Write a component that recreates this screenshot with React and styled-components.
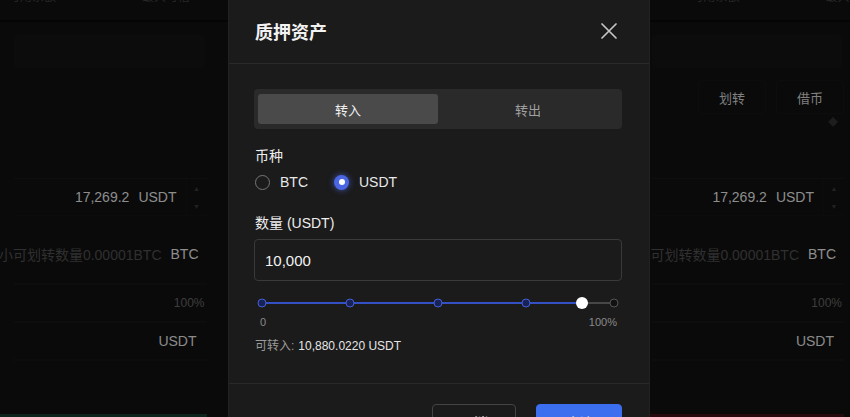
import React from 'react';
import styled, { createGlobalStyle } from 'styled-components';

const GlobalStyle = createGlobalStyle`
  body {
    margin: 0;
    background: #0b0b0b;
    font-family: "Liberation Sans", "Noto Sans CJK SC", sans-serif;
  }
`;

const PAGE = styled.div`
  position: relative;
  width: 850px;
  height: 417px;
  overflow: hidden;
  display: grid;
  grid-template-columns: 1fr 2fr 1fr;
  background: #0f0f0f;
`;

const OVERLAY = styled.div`
  position: absolute;
  inset: 0;
  background: rgba(0, 0, 0, 0.32);
`;

/* background trade panels */

const PANEL = styled.div`
  display: flex;
  flex-direction: column;
  padding: 0 6px 0 14px;
  overflow: hidden;
  color: #d0d0d0;
  font-size: 14px;
`;

const CENTER = styled.div`
  border-top: 2px solid #080808;
  margin-top: 20px;
`;

const TOP_ROW = styled.div`
  height: 22px;
  margin: 0 -6px 0 -14px;
  padding-left: ${(p) => p.$offset}px;
  display: flex;
  gap: 86px;
  border-bottom: 2px solid #080808;
  box-sizing: border-box;
  white-space: nowrap;

  span {
    margin-top: -13px;
    font-size: 12px;
    color: #3a3a3a;
  }
`;

const TAB_BOX = styled.div`
  height: 33px;
  margin-top: 13px;
  margin-right: 2px;
  background: #121212;
  border-radius: 4px;
`;

const ACTION_ROW = styled.div`
  height: 34px;
  margin-top: 12px;
  display: flex;
  justify-content: flex-end;
  gap: 10px;
  visibility: ${(p) => (p.$show ? 'visible' : 'hidden')};
`;

const GHOST_BUTTON = styled.div`
  width: 66px;
  display: flex;
  align-items: center;
  justify-content: center;
  border: 1px solid #141414;
  border-radius: 4px;
  font-size: 13px;
  color: #bdbdbd;
`;

const ICON_ROW = styled.div`
  height: 30px;
  display: flex;
  justify-content: flex-end;
  align-items: flex-start;
  padding-right: 6px;
  color: #2c2c2c;
  font-size: 10px;
`;

const FIELD = styled.div`
  height: 36px;
  margin-top: ${(p) => p.$top || 0}px;
  display: flex;
  align-items: center;
  justify-content: flex-end;
  gap: 9px;
  border-top: ${(p) => (p.$boxed ? '1px solid #151515' : 'none')};
  border-bottom: ${(p) => (p.$boxed ? '1px solid #131313' : 'none')};
  padding-right: ${(p) => p.$pad || 0}px;
  white-space: nowrap;
`;

const DIM = styled.span`
  color: #474747;
`;

const STEPPER = styled.div`
  width: 20px;
  height: 100%;
  display: flex;
  flex-direction: column;
  justify-content: space-around;
  align-items: center;
  border-left: 1px solid #131313;
  font-size: 7px;
  color: #333;
`;

const RULE = styled.div`
  height: 2px;
  margin-top: ${(p) => p.$top}px;
  background: #141414;
`;

const SMALL = styled.div`
  margin-top: ${(p) => p.$top}px;
  text-align: right;
  font-size: ${(p) => p.$size || 14}px;
  color: ${(p) => p.$color || '#cccccc'};
  padding-right: ${(p) => p.$pad || 0}px;
`;

const TRADE_BUTTON = styled.div`
  height: 30px;
  margin-top: auto;
  margin-bottom: -27px;
  margin-left: -14px;
  background: ${(p) => p.$color};
`;

const TradePanel = ({ actions, offset, buy }) => (
  <PANEL>
    <TOP_ROW $offset={offset}>
      <span>可用余额</span>
      <span>最大可借</span>
    </TOP_ROW>
    <TAB_BOX />
    <ACTION_ROW $show={actions}>
      <GHOST_BUTTON>划转</GHOST_BUTTON>
      <GHOST_BUTTON>借币</GHOST_BUTTON>
    </ACTION_ROW>
    <ICON_ROW>{actions ? '◆' : ''}</ICON_ROW>
    <FIELD $top={34} $boxed>
      <span>17,269.2</span>
      <span>USDT</span>
      <STEPPER>
        <span>▲</span>
        <span>▼</span>
      </STEPPER>
    </FIELD>
    <FIELD $top={20} $pad={8}>
      <DIM>最小可划转数量0.00001BTC</DIM>
      <span>BTC</span>
    </FIELD>
    <RULE $top={11} />
    <SMALL $top={11} $size={12} $color="#5c5c5c" $pad={2}>100%</SMALL>
    <RULE $top={11} />
    <SMALL $top={10} $pad={10}>USDT</SMALL>
    <RULE $top={10} />
    <TRADE_BUTTON $color={buy ? '#14352b' : '#3a1015'} />
  </PANEL>
);

/* modal */

const MODAL = styled.div`
  position: absolute;
  left: 228px;
  top: -6px;
  width: 422px;
  height: 470px;
  box-sizing: border-box;
  display: flex;
  flex-direction: column;
  background: #1b1b1b;
  border-left: 1px solid #222;
  border-right: 1px solid #222;
  border-radius: 6px;
  color: #ececec;
`;

const HEADER = styled.div`
  height: 70px;
  box-sizing: border-box;
  padding: 4px 32px 0 26px;
  display: flex;
  align-items: center;
  justify-content: space-between;
  border-bottom: 1px solid #2a2a2a;
`;

const TITLE = styled.h2`
  margin: 0;
  font-size: 18px;
  font-weight: 700;
  color: #f2f2f2;
`;

const CLOSE = styled.button`
  padding: 0;
  border: none;
  background: none;
  display: flex;
  color: #c4c4c4;
`;

const BODY = styled.div`
  padding: 25px 27px 29px 25px;
  display: flex;
  flex-direction: column;
`;

const TABS = styled.div`
  height: 40px;
  box-sizing: border-box;
  padding: 5px 4px;
  display: grid;
  grid-template-columns: 1fr 1fr;
  background: #2a2a2a;
  border-radius: 4px;
`;

const TAB = styled.div`
  display: flex;
  align-items: center;
  justify-content: center;
  border-radius: 3px;
  font-size: 13px;
  background: ${(p) => (p.$active ? '#4a4a4a' : 'transparent')};
  color: ${(p) => (p.$active ? '#f0f0f0' : '#a0a0a0')};
`;

const LABEL = styled.div`
  margin-top: ${(p) => p.$top}px;
  padding-left: 1px;
  font-size: 14px;
  line-height: 18px;
  color: #eeeeee;
`;

const RADIO_ROW = styled.div`
  margin-top: 7px;
  height: 20px;
  display: flex;
  align-items: center;
  gap: 26px;
  padding-left: 1px;
`;

const RADIO_OPTION = styled.label`
  display: flex;
  align-items: center;
  gap: 10px;
  font-size: 14px;
  color: #e8e8e8;
`;

const RADIO_DOT = styled.span`
  width: 15px;
  height: 15px;
  box-sizing: border-box;
  border-radius: 50%;
  display: flex;
  align-items: center;
  justify-content: center;
  border: ${(p) => (p.$checked ? 'none' : '1.5px solid #767676')};
  background: ${(p) => (p.$checked ? '#4a66e2' : 'transparent')};
  box-shadow: ${(p) => (p.$checked ? '0 0 6px rgba(80, 110, 240, 0.7)' : 'none')};

  &::after {
    content: '';
    display: ${(p) => (p.$checked ? 'block' : 'none')};
    width: 6px;
    height: 6px;
    border-radius: 50%;
    background: #ffffff;
  }
`;

const INPUT = styled.input`
  margin-top: 7px;
  height: 42px;
  box-sizing: border-box;
  padding: 0 10px;
  border: 1px solid #3a3a3a;
  border-radius: 4px;
  background: #1b1b1b;
  color: #f2f2f2;
  font-family: inherit;
  font-size: 15px;
  outline: none;
`;

const SLIDER = styled.div`
  margin-top: 14px;
  height: 16px;
  padding: 0 8px;
  display: flex;
  align-items: center;
`;

const TRACK = styled.div`
  position: relative;
  flex: 1;
  height: 2px;
  background: #474747;
`;

const FILL = styled.div`
  height: 100%;
  background: #3450c4;
`;

const MARK = styled.span`
  position: absolute;
  top: 50%;
  width: 9px;
  height: 9px;
  box-sizing: border-box;
  border-radius: 50%;
  transform: translate(-50%, -50%);
  border: 1.5px solid ${(p) => (p.$on ? '#4360d8' : '#555')};
  background: ${(p) => (p.$on ? '#182256' : '#111')};
`;

const THUMB = styled.span`
  position: absolute;
  top: 50%;
  width: 12px;
  height: 12px;
  border-radius: 50%;
  transform: translate(-50%, -50%);
  background: #ffffff;
`;

const SCALE = styled.div`
  margin-top: 4px;
  padding: 0 5px 0 6px;
  display: flex;
  justify-content: space-between;
  font-size: 11px;
  line-height: 14px;
  color: #8a8a8a;
`;

const AVAILABLE = styled.div`
  margin-top: 9px;
  padding-left: 1px;
  display: flex;
  gap: 4px;
  font-size: 12px;
  line-height: 16px;
  color: #9a9a9a;

  strong {
    font-weight: 400;
    color: #e6e6e6;
  }
`;

const FOOTER = styled.div`
  padding: 20px 27px 0 0;
  display: flex;
  justify-content: flex-end;
  gap: 20px;
  border-top: 1px solid #292929;
`;

const BUTTON = styled.button`
  width: ${(p) => (p.$primary ? 86 : 84)}px;
  height: 36px;
  border-radius: 4px;
  border: 1px solid ${(p) => (p.$primary ? '#3b6ff0' : '#444')};
  background: ${(p) => (p.$primary ? '#3b6ff0' : 'transparent')};
  color: #f0f0f0;
  font-family: inherit;
  font-size: 14px;
`;

const Slider = ({ value }) => (
  <SLIDER>
    <TRACK>
      <FILL style={{ width: `${value}%` }} />
      {[0, 25, 50, 75, 100].map((m) => (
        <MARK key={m} $on={m <= value} style={{ left: `${m}%` }} />
      ))}
      <THUMB style={{ left: `${value}%` }} />
    </TRACK>
  </SLIDER>
);

const PledgeModal = () => (
  <MODAL>
    <HEADER>
      <TITLE>质押资产</TITLE>
      <CLOSE>
        <svg width="16" height="16" viewBox="0 0 16 16">
          <path d="M1 1L15 15M15 1L1 15" stroke="currentColor" strokeWidth="1.7" strokeLinecap="round" />
        </svg>
      </CLOSE>
    </HEADER>
    <BODY>
      <TABS>
        <TAB $active>转入</TAB>
        <TAB>转出</TAB>
      </TABS>
      <LABEL $top={18}>币种</LABEL>
      <RADIO_ROW>
        <RADIO_OPTION>
          <RADIO_DOT />
          BTC
        </RADIO_OPTION>
        <RADIO_OPTION>
          <RADIO_DOT $checked />
          USDT
        </RADIO_OPTION>
      </RADIO_ROW>
      <LABEL $top={22}>数量 (USDT)</LABEL>
      <INPUT defaultValue="10,000" />
      <Slider value={91} />
      <SCALE>
        <span>0</span>
        <span>100%</span>
      </SCALE>
      <AVAILABLE>
        <span>可转入:</span>
        <strong>10,880.0220 USDT</strong>
      </AVAILABLE>
    </BODY>
    <FOOTER>
      <BUTTON>取消</BUTTON>
      <BUTTON $primary>确认</BUTTON>
    </FOOTER>
  </MODAL>
);

const App = () => {
  return (
    <React.Fragment>
      <GlobalStyle />
      <PAGE>
        <TradePanel offset={8} buy />
        <CENTER />
        <TradePanel offset={54} actions />
        <OVERLAY />
        <PledgeModal />
      </PAGE>
    </React.Fragment>
  );
};

export default App;
